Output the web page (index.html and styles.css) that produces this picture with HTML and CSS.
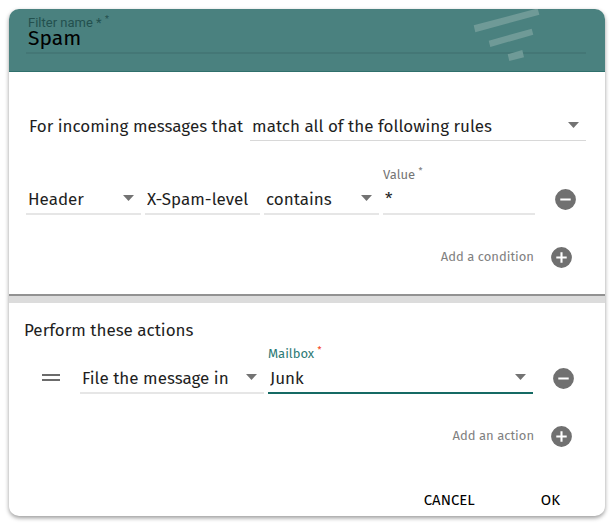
FILE: index.html
```html
<!DOCTYPE html>
<html lang="en">

	<head>
		<meta charset="UTF-8">
		<meta name="viewport" content="width=device-width, initial-scale=1">
		<title>Filter</title>
		<link rel="stylesheet" href="styles.css">
	</head>

	<body>
		<form class="dialog">
			<header class="toolbar">
				<svg class="logo" viewBox="0 0 67 53" aria-hidden="true">
					<path d="M.7 16.3 64.6-.6l1.8 6.3L2.3 23.3zM15.7 31.7l43-12 1.6 6-43 12.3zM34.7 45.3l14.6-4.3 1.7 7.3L36.3 52z" />
				</svg>
				<label for="name">Filter name * <sup>*</sup></label>
				<input id="name" type="text" value="Spam">
			</header>

			<section class="conditions">
				<div class="match">
					<label for="match">For incoming messages that</label>
					<div class="select">
						<select id="match">
							<option>match all of the following rules</option>
							<option>match any of the following rules</option>
						</select>
						<svg viewBox="0 0 11 6"><path d="M0 0h11L5.500 6z" /></svg>
					</div>
				</div>

				<div class="rule">
					<div class="select">
						<select aria-label="Field">
							<option>Header</option>
							<option>Subject</option>
						</select>
						<svg viewBox="0 0 11 6"><path d="M0 0h11L5.500 6z" /></svg>
					</div>
					<input class="text" type="text" value="X-Spam-level" aria-label="Header name">
					<div class="select">
						<select aria-label="Operator">
							<option>contains</option>
							<option>is</option>
						</select>
						<svg viewBox="0 0 11 6"><path d="M0 0h11L5.500 6z" /></svg>
					</div>
					<div class="field">
						<label for="value">Value <sup>*</sup></label>
						<input id="value" class="text" type="text" value="*">
					</div>
					<button type="button" class="icon" aria-label="Remove condition">
						<svg viewBox="0 0 24 24"><path d="M12 2a10 10 0 1 0 0 20 10 10 0 0 0 0-20zm5 11H7v-2h10z" /></svg>
					</button>
				</div>

				<div class="add">
					<label for="add-condition">Add a condition</label>
					<button type="button" class="icon" id="add-condition">
						<svg viewBox="0 0 24 24"><path d="M12 2a10 10 0 1 0 0 20 10 10 0 0 0 0-20zm5 11h-4v4h-2v-4H7v-2h4V7h2v4h4z" /></svg>
					</button>
				</div>
			</section>

			<section class="actions">
				<h2>Perform these actions</h2>
				<div class="action">
					<svg class="handle" viewBox="0 0 18 8"><path d="M0 0h18v2H0zM0 5h18v2H0z" /></svg>
					<div class="select">
						<select aria-label="Action">
							<option>File the message in</option>
							<option>Discard the message</option>
						</select>
						<svg viewBox="0 0 11 6"><path d="M0 0h11L5.500 6z" /></svg>
					</div>
					<div class="field focused">
						<label for="mailbox">Mailbox <sup>*</sup></label>
						<div class="select">
							<select id="mailbox">
								<option>Junk</option>
								<option>Trash</option>
							</select>
							<svg viewBox="0 0 11 6"><path d="M0 0h11L5.500 6z" /></svg>
						</div>
					</div>
					<button type="button" class="icon" aria-label="Remove action">
						<svg viewBox="0 0 24 24"><path d="M12 2a10 10 0 1 0 0 20 10 10 0 0 0 0-20zm5 11H7v-2h10z" /></svg>
					</button>
				</div>

				<div class="add">
					<label for="add-action">Add an action</label>
					<button type="button" class="icon" id="add-action">
						<svg viewBox="0 0 24 24"><path d="M12 2a10 10 0 1 0 0 20 10 10 0 0 0 0-20zm5 11h-4v4h-2v-4H7v-2h4V7h2v4h4z" /></svg>
					</button>
				</div>

				<footer>
					<button type="button">CANCEL</button>
					<button type="submit">OK</button>
				</footer>
			</section>
		</form>
	</body>

</html>
```
FILE: styles.css
```css
* {
	box-sizing: border-box;
}

body {
	margin: 0;
	padding: 9px;
	background: #fff;
	color: #1e1e1e;
	font: 17px/24px "Fira Sans", "Noto Sans", sans-serif;
}

input,
select,
button {
	margin: 0;
	padding: 0;
	border: 0;
	border-radius: 0;
	outline: 0;
	background: none;
	color: inherit;
	font: inherit;
}

button {
	cursor: pointer;
}

sup {
	font-size: 9px;
	line-height: 1;
}

.dialog {
	border-radius: 10px;
	overflow: hidden;
	background: #fff;
	box-shadow: 0 2px 4px rgba(0, 0, 0, .4);
}

/* header */
.toolbar {
	position: relative;
	height: 63px;
	padding: 4px 19px 0 17px;
	border-bottom: 1px solid #2f706c;
	background: #4a817f;
}

.toolbar label {
	display: block;
	height: 14px;
	padding-left: 2px;
	color: #23504e;
	font: 13px/20px Roboto, sans-serif;
}

.toolbar input {
	display: block;
	width: 100%;
	height: 27px;
	padding: 0 2px 4px;
	border-bottom: 2px solid rgba(0, 0, 0, .07);
	color: #000;
	font-size: 21px;
}

.logo {
	position: absolute;
	top: 0;
	right: 65px;
	width: 67px;
	height: 53px;
	fill: #6f9a97;
}

/* fields */
.select {
	position: relative;
	border-bottom: 2px solid #e6e6e6;
}

.select select {
	display: block;
	appearance: none;
	width: 100%;
	height: 28px;
	padding: 2px 20px 0 2px;
}

.select svg {
	position: absolute;
	top: 10px;
	right: 7px;
	width: 11px;
	height: 6px;
	fill: #737373;
	pointer-events: none;
}

.text {
	display: block;
	width: 100%;
	height: 30px;
	padding: 0 2px;
	border-bottom: 2px solid #e6e6e6;
}

.field label {
	display: block;
	height: 20px;
	color: #757575;
	font-size: 13px;
	line-height: 20px;
}

.focused label {
	color: #2d7a75;
}

.focused sup {
	color: #f4360b;
}

.focused .select {
	border-color: #156a64;
}

.icon {
	height: 32px;
	width: 32px;
}

.icon svg {
	display: block;
	width: 25px;
	height: 25px;
	margin: auto;
	fill: #707070;
}

/* conditions */
.conditions {
	padding: 40px 19px 21px 17px;
	border-bottom: 2px solid #929292;
}

.match {
	display: flex;
	gap: 7px;
	align-items: center;
	padding-left: 3px;
}

.match .select {
	flex: 1;
	border-bottom-width: 1px;
	border-color: #d8d8d8;
}

.rule,
.action {
	display: grid;
	grid-template-columns: 115fr 115fr 115fr 152fr 47px;
	gap: 4px;
	align-items: end;
	margin-top: 24px;
}

.rule .icon,
.action .icon {
	margin-left: 10px;
}

.add {
	display: flex;
	justify-content: flex-end;
	align-items: center;
	gap: 11px;
	margin-top: 26px;
	padding-right: 9px;
	color: #808080;
	font-size: 13px;
}

/* actions */
.actions {
	padding: 16px 19px 0 15px;
	border-top: 7px solid #dcdcdc;
}

h2 {
	margin: 0;
	font-size: 17px;
	font-weight: 400;
}

.action {
	grid-template-columns: 52px 184fr 265fr 49px;
	margin-top: 1px;
}

.handle {
	width: 18px;
	height: 8px;
	margin: 0 0 12px 18px;
	fill: #6b6b6b;
}

footer {
	display: flex;
	justify-content: flex-end;
	margin-top: 32px;
}

footer button {
	height: 32px;
	padding: 0 26px;
	color: #000;
	font-size: 15px;
}

footer button + button {
	margin-left: 14px;
}
```
